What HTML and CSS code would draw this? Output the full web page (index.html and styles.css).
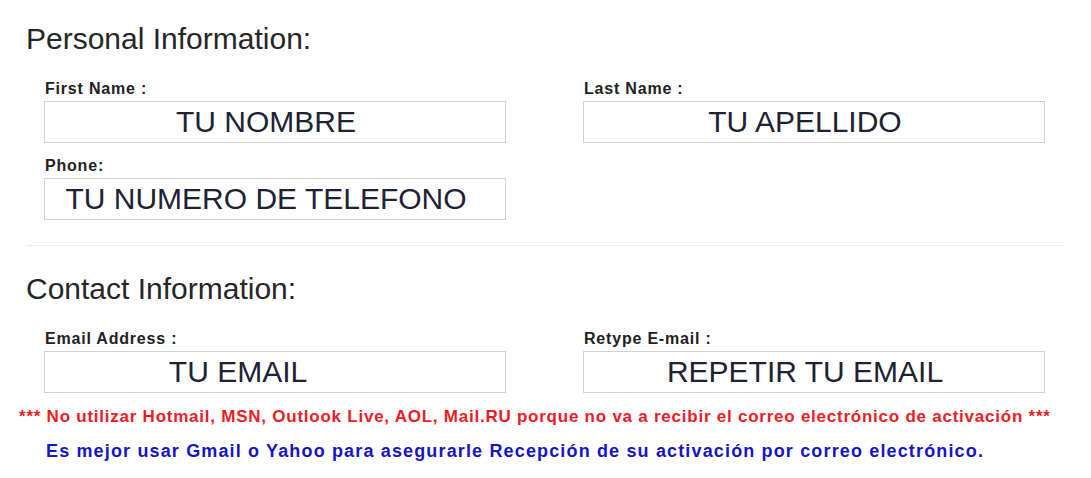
FILE: index.html
```html
<!DOCTYPE html>
<html lang="es">
<head>
  <meta charset="UTF-8">
  <meta name="viewport" content="width=device-width, initial-scale=1.0">
  <title>Registro</title>
  <link rel="stylesheet" href="styles.css">
</head>
<body>
  <div class="formulario">
    <section class="bloque">
      <h2 class="titulo">Personal Information:</h2>
      <div class="fila">
        <div class="campo">
          <label for="nombre">First Name :</label>
          <input type="text" id="nombre" value="TU NOMBRE">
        </div>
        <div class="campo">
          <label for="apellido">Last Name :</label>
          <input type="text" id="apellido" value="TU APELLIDO">
        </div>
      </div>
      <div class="fila">
        <div class="campo">
          <label for="telefono">Phone:</label>
          <input type="text" id="telefono" value="TU NUMERO DE TELEFONO">
        </div>
      </div>
    </section>

    <hr class="separador">

    <section class="bloque">
      <h2 class="titulo">Contact Information:</h2>
      <div class="fila">
        <div class="campo">
          <label for="email">Email Address :</label>
          <input type="text" id="email" class="input-email" value="TU EMAIL">
        </div>
        <div class="campo">
          <label for="email2">Retype E-mail :</label>
          <input type="text" id="email2" value="REPETIR TU EMAIL">
        </div>
      </div>
    </section>

    <p class="aviso">*** No utilizar Hotmail, MSN, Outlook Live, AOL, Mail.RU porque no va a recibir el correo electrónico de activación ***</p>
    <p class="nota">Es mejor usar Gmail o Yahoo para asegurarle Recepción de su activación por correo electrónico.</p>
  </div>
</body>
</html>
```

FILE: styles.css
```css
body {
  font-family: "Liberation Sans", Arial, sans-serif;
  margin: 0;
  padding: 0;
  background-color: #fff;
}
.formulario {
  width: 1091px;
}
.titulo {
  margin: 22px 0 0 26px;
  font-size: 30px;
  line-height: 34px;
  font-weight: normal;
  color: #262626;
}
.fila {
  display: flex;
  gap: 77px;
  padding-left: 44px;
  margin-top: 24px;
}
.fila + .fila {
  margin-top: 14px;
}
.campo {
  display: flex;
  flex-direction: column;
  gap: 3px;
  width: 462px;
}
.campo label {
  padding-left: 1px;
  font-size: 16px;
  line-height: 18px;
  font-weight: bold;
  letter-spacing: 0.8px;
  color: #222;
}
.campo input {
  box-sizing: border-box;
  width: 462px;
  height: 42px;
  margin: 0;
  padding: 0 18px 0 0;
  border: 1px solid #d2d2d2;
  font-family: "Liberation Sans", Arial, sans-serif;
  font-size: 30px;
  color: #1e2233;
  text-align: center;
  background: #fff;
}
.campo .input-email {
  padding-right: 74px;
}
.separador {
  margin: 25px 26px 0 26px;
  border: none;
  border-top: 1px solid #eee;
  height: 0;
}
.bloque + .separador + .bloque .titulo {
  margin-top: 26px;
}
.aviso {
  margin: 14px 0 0 19px;
  font-size: 17px;
  line-height: 20px;
  font-weight: bold;
  letter-spacing: 0.76px;
  color: #ee1c24;
}
.nota {
  margin: 13px 0 0 46px;
  font-size: 18px;
  line-height: 22px;
  font-weight: bold;
  letter-spacing: 1.15px;
  color: #1515c8;
}
```
